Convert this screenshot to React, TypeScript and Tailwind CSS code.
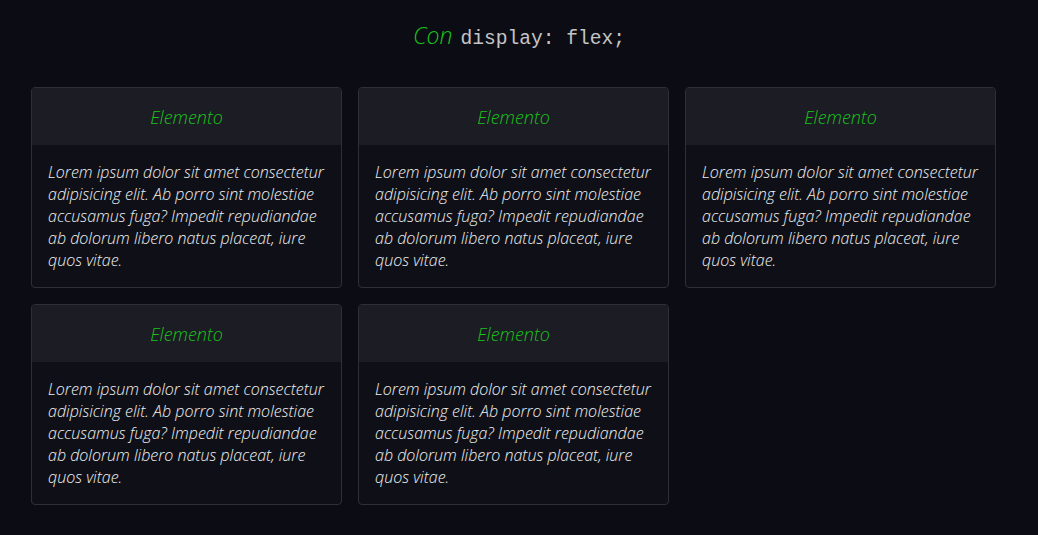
import React from "react";

const lorem =
  "Lorem ipsum dolor sit amet consectetur adipisicing elit. Ab porro sint molestiae accusamus fuga? Impedit repudiandae ab dolorum libero natus placeat, iure quos vitae.";

function Card() {
  return (
    <div className="w-[311px] overflow-hidden rounded-[4px] border border-[#2e2f37] bg-[#0f1017]">
      <div className="bg-[#1b1c24] pt-[16px] pb-[14px] text-center text-[18px] leading-[27px] font-light italic text-[#1ac21a]">
        Elemento
      </div>
      <p className="px-4 pt-4 pb-4 text-[16px] leading-[22px] font-light italic text-[#f2f2f4]">
        {lorem}
      </p>
    </div>
  );
}

export default function App() {
  return (
    <div
      className="min-h-[535px] w-full bg-[#0c0d14] pt-[20px]"
      style={{ fontFamily: '"Open Sans", sans-serif' }}
    >
      <h1 className="mb-[33px] flex items-baseline justify-center gap-[8px] leading-[30px]">
        <span className="text-[23px] font-light italic text-[#1ac21a]">Con</span>
        <code className="font-['Liberation_Mono',monospace] text-[19.6px] text-[#c4c4c6]">
          display: flex;
        </code>
      </h1>
      <div className="ml-[31px] flex w-[970px] flex-wrap gap-4">
        {[0, 1, 2, 3, 4].map((i) => (
          <Card key={i} />
        ))}
      </div>
    </div>
  );
}
